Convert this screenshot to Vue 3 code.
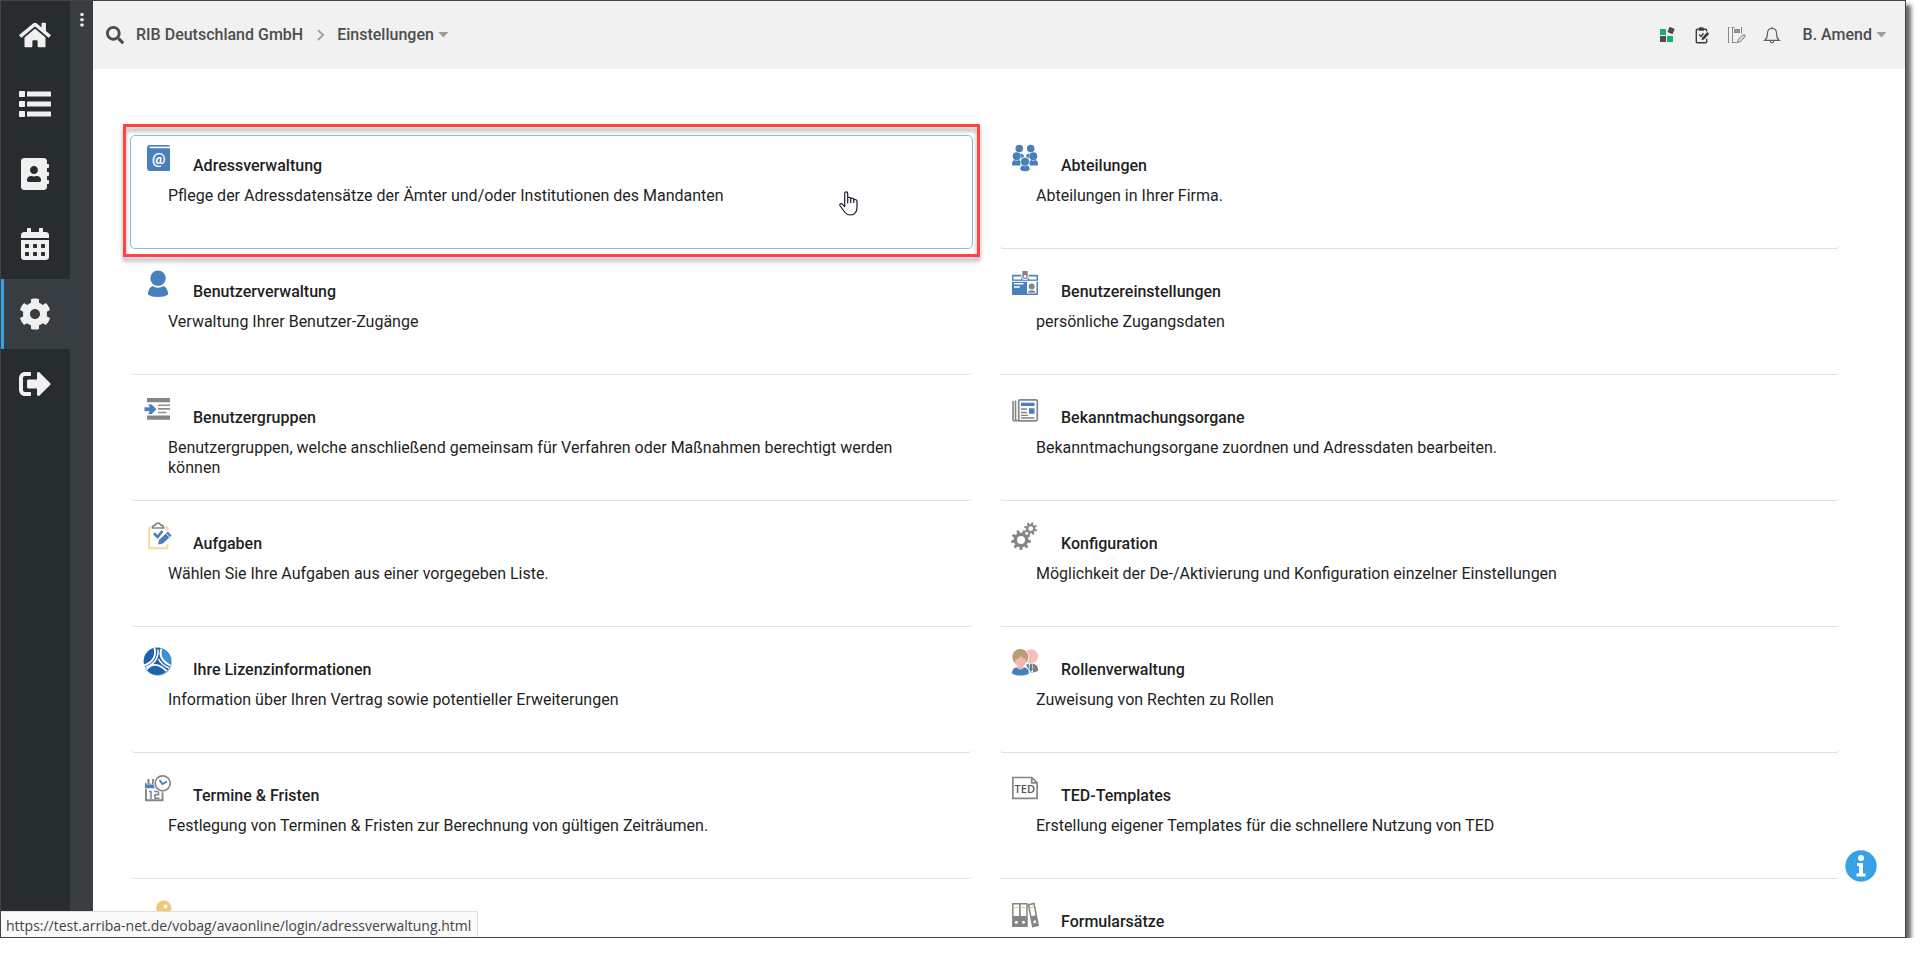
<script setup>
const nav = [
  { id: 'home', label: 'Startseite', box: '0 0 576 512', w: 32, h: 28, d: 'M280.37 148.26L96 300.11V464a16 16 0 0 0 16 16l112.06-.29a16 16 0 0 0 15.92-16V368a16 16 0 0 1 16-16h64a16 16 0 0 1 16 16v95.64a16 16 0 0 0 16 16.05L464 480a16 16 0 0 0 16-16V300L295.67 148.26a12.19 12.19 0 0 0-15.3 0zM571.6 251.47L488 182.56V44.05a12 12 0 0 0-12-12h-56a12 12 0 0 0-12 12v72.61L318.47 43a48 48 0 0 0-61 0L4.34 251.47a12 12 0 0 0-1.6 16.9l25.5 31A12 12 0 0 0 45.15 301l235.22-193.74a12.19 12.19 0 0 1 15.3 0L530.9 301a12 12 0 0 0 16.9-1.6l25.5-31a12 12 0 0 0-1.7-16.93z' },
  { id: 'list', label: 'Liste', box: '0 0 32 32', w: 32, h: 32, d: 'M.8 3h4.4a.8.8 0 0 1 .8.8v4.4a.8.8 0 0 1-.8.8H.8a.8.8 0 0 1-.8-.8V3.800a.8.8 0 0 1 .8-.8zM.8 13h4.400a.8.8 0 0 1 .8.8v4.400a.8.8 0 0 1-.8.8H.8a.8.8 0 0 1-.8-.8v-4.400a.8.8 0 0 1 .8-.8zM.8 23h4.400a.8.8 0 0 1 .8.8v4.400a.8.8 0 0 1-.8.8H.8a.8.8 0 0 1-.8-.8v-4.400a.8.8 0 0 1 .8-.8zM8.500 3.500h23a.5.5 0 0 1 .5.5v4a.5.5 0 0 1-.5.5h-23A.5.5 0 0 1 8 8V4a.5.5 0 0 1 .5-.5zM8.500 13.500h23a.5.5 0 0 1 .5.5v4a.5.5 0 0 1-.5.5h-23A.5.5 0 0 1 8 18v-4a.5.5 0 0 1 .5-.5zM8.500 23.500h23a.5.5 0 0 1 .5.5v4a.5.5 0 0 1-.5.5h-23A.5.5 0 0 1 8 28v-4a.5.5 0 0 1 .5-.5z' },
  { id: 'contacts', label: 'Adressbuch', box: '0 0 448 512', w: 28, h: 32, d: 'M436 160c6.6 0 12-5.4 12-12v-40c0-6.6-5.4-12-12-12h-20V48c0-26.5-21.5-48-48-48H48C21.5 0 0 21.5 0 48v416c0 26.5 21.5 48 48 48h320c26.5 0 48-21.5 48-48v-48h20c6.6 0 12-5.4 12-12v-40c0-6.6-5.4-12-12-12h-20v-64h20c6.6 0 12-5.4 12-12v-40c0-6.6-5.4-12-12-12h-20v-64h20zm-228-32c35.3 0 64 28.7 64 64s-28.7 64-64 64-64-28.7-64-64 28.7-64 64-64zm112 236.8c0 10.6-10 19.2-22.4 19.2H118.4C106 384 96 375.4 96 364.8v-19.2c0-31.8 30.1-57.6 67.2-57.6h5c12.3 5.1 25.7 8 39.8 8s27.6-2.9 39.8-8h5c37.1 0 67.2 25.8 67.2 57.6v19.2z' },
  { id: 'calendar', label: 'Kalender', box: '0 0 448 512', w: 28, h: 32, d: 'M0 464c0 26.5 21.5 48 48 48h352c26.5 0 48-21.5 48-48V192H0zM64 268q0-12 12-12h40q12 0 12 12v40q0 12-12 12H76q-12 0-12-12zM192 268q0-12 12-12h40q12 0 12 12v40q0 12-12 12h-40q-12 0-12-12zM320 268q0-12 12-12h40q12 0 12 12v40q0 12-12 12h-40q-12 0-12-12zM64 396q0-12 12-12h40q12 0 12 12v40q0 12-12 12H76q-12 0-12-12zM192 396q0-12 12-12h40q12 0 12 12v40q0 12-12 12h-40q-12 0-12-12zM320 396q0-12 12-12h40q12 0 12 12v40q0 12-12 12h-40q-12 0-12-12zM400 64h-48V16c0-8.8-7.2-16-16-16h-32c-8.8 0-16 7.2-16 16v48H160V16c0-8.8-7.2-16-16-16h-32c-8.8 0-16 7.2-16 16v48H48C21.5 64 0 85.5 0 112v48h448v-48c0-26.5-21.5-48-48-48z' },
  { id: 'settings', label: 'Einstellungen', active: true, box: '0 0 512 512', w: 32, h: 32, d: 'M487.4 315.7l-42.6-24.6c4.3-23.2 4.3-47 0-70.2l42.6-24.6c4.9-2.8 7.1-8.6 5.5-14-11.1-35.6-30-67.8-54.7-94.6-3.8-4.1-10-5.1-14.8-2.3L380.8 110c-17.9-15.4-38.5-27.3-60.8-35.1V25.8c0-5.6-3.9-10.5-9.4-11.7-36.7-8.2-74.3-7.8-109.2 0-5.500 1.2-9.4 6.1-9.4 11.7V75c-22.2 7.9-42.8 19.8-60.8 35.1L88.7 85.500c-4.9-2.8-11-1.9-14.8 2.3-24.7 26.7-43.6 58.9-54.7 94.6-1.7 5.4.6 11.2 5.500 14L67.3 221c-4.3 23.2-4.3 47 0 70.2l-42.6 24.6c-4.9 2.8-7.1 8.6-5.500 14 11.1 35.6 30 67.8 54.7 94.6 3.8 4.1 10 5.1 14.8 2.3l42.6-24.6c17.9 15.4 38.500 27.3 60.8 35.1v49.2c0 5.6 3.9 10.500 9.4 11.7 36.7 8.2 74.3 7.8 109.2 0 5.500-1.2 9.4-6.1 9.4-11.7v-49.2c22.2-7.9 42.8-19.8 60.8-35.1l42.6 24.6c4.9 2.8 11 1.9 14.8-2.3 24.7-26.7 43.6-58.9 54.7-94.6 1.500-5.500-.7-11.3-5.6-14.100zM256 336c-44.1 0-80-35.9-80-80s35.9-80 80-80 80 35.9 80 80-35.9 80-80 80z' },
  { id: 'logout', label: 'Abmelden', box: '0 0 512 512', w: 32, h: 32, d: 'M497 273L329 441c-15 15-41 4.5-41-17v-96H152c-13.3 0-24-10.7-24-24v-96c0-13.3 10.7-24 24-24h136V88c0-21.4 25.9-32 41-17l168 168c9.3 9.4 9.3 24.6 0 34zM192 436v-40c0-6.6-5.4-12-12-12H96c-17.7 0-32-14.3-32-32V160c0-17.7 14.3-32 32-32h84c6.6 0 12-5.4 12-12V76c0-6.6-5.4-12-12-12H96c-53 0-96 43-96 96v192c0 53 43 96 96 96h84c6.6 0 12-5.4 12-12z' },
]

const cards = [
  { icon: 'address', title: 'Adressverwaltung', text: 'Pflege der Adressdatensätze der Ämter und/oder Institutionen des Mandanten', hover: true },
  { icon: 'departments', title: 'Abteilungen', text: 'Abteilungen in Ihrer Firma.' },
  { icon: 'user', title: 'Benutzerverwaltung', text: 'Verwaltung Ihrer Benutzer-Zugänge' },
  { icon: 'badge', title: 'Benutzereinstellungen', text: 'persönliche Zugangsdaten' },
  { icon: 'groups', title: 'Benutzergruppen', text: 'Benutzergruppen, welche anschließend gemeinsam für Verfahren oder Maßnahmen berechtigt werden können' },
  { icon: 'news', title: 'Bekanntmachungsorgane', text: 'Bekanntmachungsorgane zuordnen und Adressdaten bearbeiten.' },
  { icon: 'tasks', title: 'Aufgaben', text: 'Wählen Sie Ihre Aufgaben aus einer vorgegeben Liste.' },
  { icon: 'gears', title: 'Konfiguration', text: 'Möglichkeit der De-/Aktivierung und Konfiguration einzelner Einstellungen' },
  { icon: 'license', title: 'Ihre Lizenzinformationen', text: 'Information über Ihren Vertrag sowie potentieller Erweiterungen' },
  { icon: 'roles', title: 'Rollenverwaltung', text: 'Zuweisung von Rechten zu Rollen' },
  { icon: 'dates', title: 'Termine & Fristen', text: 'Festlegung von Terminen & Fristen zur Berechnung von gültigen Zeiträumen.' },
  { icon: 'ted', title: 'TED-Templates', text: 'Erstellung eigener Templates für die schnellere Nutzung von TED' },
  { icon: 'key' },
  { icon: 'folders', title: 'Formularsätze' },
]

// Outline of a cog wheel: `teeth` teeth between the root and outer radius, with a round hole.
function cog(cx, cy, outer, root, hole, teeth, turn) {
  const step = (Math.PI * 2) / teeth
  const points = []
  for (let i = 0; i < teeth; i++) {
    const a = i * step + turn
    for (const [r, o] of [[root, -0.3], [outer, -0.18], [outer, 0.18], [root, 0.3]]) {
      points.push(`${(cx + r * Math.cos(a + o * step)).toFixed(2)} ${(cy + r * Math.sin(a + o * step)).toFixed(2)}`)
    }
  }
  return `M${points.join('L')}zM${cx - hole} ${cy}a${hole} ${hole} 0 1 0 ${hole * 2} 0a${hole} ${hole} 0 1 0 ${-hole * 2} 0z`
}
const bigCog = cog(9, 18, 10, 7.4, 4, 9, Math.PI / 2)
const smallCog = cog(18.7, 6.7, 6.6, 4.6, 2.4, 8, 0.3)
</script>

<template>
  <div class="window">
    <nav class="sidebar" aria-label="Hauptnavigation">
      <a v-for="n in nav" :key="n.id" href="#" class="nav-item" :class="{ active: n.active }" :aria-label="n.label">
        <svg :width="n.w" :height="n.h" :viewBox="n.box" fill="currentColor"><path fill-rule="evenodd" :d="n.d" /></svg>
      </a>
    </nav>
    <div class="strip">
      <button class="dots" aria-label="Menü">
        <svg width="4" height="16" viewBox="0 0 4 16" fill="#ededed"><rect x=".3" y="1" width="3.400" height="3" rx="1" /><rect x=".3" y="6.300" width="3.400" height="3" rx="1" /><rect x=".3" y="11.600" width="3.400" height="3" rx="1" /></svg>
      </button>
    </div>

    <div class="content">
      <header class="topbar">
        <button class="plain" aria-label="Suche">
          <svg width="18" height="18" viewBox="0 0 512 512" fill="#4b4b4b"><path d="M505 442.7L405.3 343c-4.500-4.500-10.600-7-17-7H372c27.600-35.3 44-79.7 44-128C416 93.1 322.9 0 208 0S0 93.1 0 208s93.1 208 208 208c48.3 0 92.7-16.4 128-44v16.3c0 6.4 2.500 12.500 7 17l99.7 99.7c9.4 9.4 24.6 9.4 33.9 0l28.3-28.3c9.4-9.4 9.4-24.6.1-34zM208 336c-70.7 0-128-57.2-128-128s57.2-128 128-128 128 57.2 128 128-57.2 128-128 128z" /></svg>
        </button>
        <a href="#" class="crumb company">RIB Deutschland GmbH</a>
        <svg class="chevron" width="8" height="12" viewBox="0 0 8 12" fill="none" stroke="#a3a3a3" stroke-width="2"><path d="M1 1l5 5-5 5" /></svg>
        <button class="plain crumb">Einstellungen<span class="caret"></span></button>

        <div class="tools">
          <button class="plain" aria-label="Module">
            <svg width="18" height="18" viewBox="0 0 18 18"><rect x="2" y="3" width="6" height="6" rx=".6" fill="#0fb36b" /><rect x="2" y="10" width="6" height="6" rx=".6" fill="#4c4c4c" /><rect x="9" y="10" width="6" height="6" rx=".6" fill="#0fb36b" /><rect x="10.300" y="1.700" width="5.600" height="5.600" rx=".6" fill="#4c4c4c" transform="rotate(24 13.100 4.500)" /></svg>
          </button>
          <button class="plain" aria-label="Aufgaben">
            <svg width="18" height="18" viewBox="0 0 18 18" fill="none" stroke="#3c3c3c"><path d="M5.500 3.200H4.300q-1 0-1 1v11.600q0 1 1 1h8.400q1 0 1-1v-3M11 3.200h1.700q1 0 1 1v1.300" stroke-width="1.400" /><path d="M5.500 4.700V2.800q0-1.500 1.700-1.500h2.200q1.600 0 1.600 1.500v1.900z" fill="#3c3c3c" stroke="none" /><path d="M6 8.500l1.900 1.900 2.600-3.200" stroke-width="1.400" /><path d="M8.500 14.200l.5-2.500 5.200-5.800 2.100 1.800-5.300 5.800z" fill="#3c3c3c" stroke="none" /></svg>
          </button>
          <button class="plain" aria-label="Notizen">
            <svg width="18" height="18" viewBox="0 0 18 18" fill="none" stroke="#8a8a8a"><path d="M.5 1v16M4.500 1v16M0 1.500h1.500M3.500 1.500h3M13.500 1v6.500M4.500 16.500h4M0 16.500h1.500" /><rect x="6.500" y="3.500" width="5" height="3" fill="#9a9a9a" /><path d="M9.500 16.500l.8-2.800 4.700-4.500q1-.7 1.700 0t0 1.700l-4.500 4.700z" stroke-width="1.100" /></svg>
          </button>
          <button class="plain" aria-label="Benachrichtigungen">
            <svg width="18" height="18" viewBox="0 0 18 18" fill="none" stroke="#606060" stroke-width="1.200"><path d="M1.800 14.300c2-1.500 2.600-3.500 2.600-6.300C4.400 4.600 6 2.400 9 2.400s4.600 2.200 4.600 5.600c0 2.800.6 4.800 2.600 6.300zM9 2.400V1M7.200 15q.3 1.800 1.800 1.800t1.800-1.800" /></svg>
          </button>
        </div>
        <button class="plain crumb user">B. Amend<span class="caret"></span></button>
      </header>

      <main class="grid">
        <a v-for="c in cards" :key="c.icon" href="#" class="card" :class="{ hover: c.hover }">
          <span class="head">
            <svg class="icon" width="28" height="28" viewBox="0 0 28 28">
              <g v-if="c.icon === 'address'">
                <path d="M6 1h18q2 0 2 2H5.500q0 1.200 1 1.200H26V27H6q-3 0-3-3V4q0-3 3-3z" fill="#4a80ba" />
                <path d="M6 3.300h19.300" stroke="#fff" stroke-width="1.400" />
                <text x="14.700" y="20" text-anchor="middle" class="at">@</text>
              </g>
              <g v-else-if="c.icon === 'departments'" fill="#4a80ba">
                <circle cx="7.300" cy="4.500" r="3.800" /><circle cx="18.700" cy="4.500" r="3.800" />
                <path d="M8.500 9.500q3 0 3.500 3l-2.500 2zM17.500 9.500q-3 0-3.500 3l2.500 2z" />
                <circle cx="4.700" cy="12.300" r="4" /><circle cx="21.300" cy="12.300" r="4" />
                <path d="M0 20.500q0-4 2.500-4.500 2.200 1.300 4.400 0l1.900 1.500q-1 2.800 0 3.900H1q-1 0-1-.9zM26 20.500q0-4-2.500-4.500-2.200 1.300-4.400 0l-1.900 1.500q1 2.800 0 3.900H25q1 0 1-.9z" />
                <circle cx="13" cy="17.700" r="4" />
                <path d="M8.300 25.700q0-3.500 2.200-4.200 2.500 1.300 5 0 2.200.7 2.200 4.200-1.500 1.600-4.700 1.600t-4.700-1.600z" />
              </g>
              <g v-else-if="c.icon === 'user'" fill="#4a80ba">
                <circle cx="14" cy="8.300" r="7.700" />
                <path d="M4 24.500q0-6.500 4.500-8.500 5.500 3.400 11 0Q24 18 24 24.500q-3 2.500-10 2.500T4 24.500z" />
              </g>
              <g v-else-if="c.icon === 'badge'">
                <rect x="0" y="4.700" width="26" height="20.300" rx="1" fill="#4a80ba" />
                <path d="M1.500 6.500H9v3H1.500zM17 6.500h7.500v3H17z" fill="#fff" />
                <path d="M0 11.300h26" stroke="#fff" />
                <path d="M2 13.700h9.500M2 17h5.800" stroke="#fff" stroke-width="1.500" />
                <rect x="15" y="11.500" width="9.500" height="12" fill="#fff" />
                <circle cx="19.700" cy="16.500" r="3" fill="#858585" /><path d="M16 22.700q0-2.500 3.700-2.500t3.700 2.500z" fill="#858585" />
                <path d="M9.300 4h7.400v3q0 3-3.700 3T9.300 7z" fill="#fff" />
                <path d="M10.300 1h5.400v5.500q0 2.500-2.700 2.500t-2.700-2.500z" fill="#858585" /><circle cx="13" cy="6.400" r="1.300" fill="#fff" />
              </g>
              <g v-else-if="c.icon === 'groups'">
                <path d="M3 2h23v4.200H3zM3 19.500h23v4.300H3z" fill="#858585" />
                <path d="M14 9.300h12M14 12.900h12M14 16.500h8.500" stroke="#8f8f8f" stroke-width="1.600" />
                <path d="M.5 11.300H6L4 8.500h3.800l4.600 4.700-4.600 4.800H4l2-2.800H.5z" fill="#4a80ba" />
              </g>
              <g v-else-if="c.icon === 'news'" fill="none" stroke="#858585">
                <rect x="6.700" y="3.800" width="18.600" height="21" rx="1.500" stroke-width="1.700" />
                <path d="M3.500 4.500v18q0 2.300 2 2.300h3M1 5v18q0 1.800 1.700 1.800h3" stroke-width="1.600" />
                <path d="M9 13h6M9 16.500h6M9 19.300h7M9 22h13.500" stroke-width="1.300" />
                <path d="M9 6.700h13.500V10H9zM17 12.300h5.500v5.500H17z" fill="#4a80ba" stroke="none" />
              </g>
              <g v-else-if="c.icon === 'tasks'" fill="none">
                <path d="M7 5.200h-.800q-1 0-1 1v20h18.300v-4M21 5.200h1.300q1.200 0 1.200 1v3" stroke="#f9d893" stroke-width="1.900" />
                <path d="M8.500 6q0-2.800 3-3.100.4-1.700 2.500-1.700t2.500 1.700q3 .3 3 3.100z" fill="#fff" stroke="#858585" stroke-width="1.700" />
                <path d="M10 11.300l3.600 3.700 4.800-6" stroke="#4a80ba" stroke-width="2.800" />
                <path d="M13.500 23l1.200-5.200 9.300-8.600 4 4.200-9.200 8.600z" fill="#4a80ba" stroke="#fff" stroke-width=".8" />
                <path d="M22 11.500l3.800 4" stroke="#fff" stroke-width=".9" />
              </g>
              <g v-else-if="c.icon === 'gears'" fill="#858585" fill-rule="evenodd">
                <path :d="bigCog" /><path :d="smallCog" />
              </g>
              <g v-else-if="c.icon === 'license'">
                <circle cx="14" cy="14" r="14" fill="#bfc8d2" />
                <circle cx="13.300" cy="13.300" r="13.700" fill="#1f61ad" />
                <path d="M17 0q8 3 10 11-.3 3-.8 5-5-3-9.500-5Q18 5 17 0z" fill="#3993d6" />
                <g fill="none" stroke="#fff" stroke-width="1.900">
                  <path d="M10.500 0Q13.500 12.500 0 17.500M17.500 .5Q13.500 11 26.300 17.500" />
                  <path d="M2.500 21.500Q11 11.500 22.500 23" />
                  <path d="M14 1.500Q15 14.500 1.500 19.500" stroke-width="1.500" />
                  <path d="M14.500 11Q17 16.500 25 20" stroke-width="1.500" />
                </g>
              </g>
              <g v-else-if="c.icon === 'roles'">
                <circle cx="19" cy="8.200" r="7" fill="#f2c0b6" />
                <path d="M14 17q2.500-2 5-1.500 7.300 0 7.300 7-2.500 2-8 2z" fill="#808080" /><path d="M17 15.500h3.500l.5 8.500h-4z" fill="#fff" /><path d="M18 16h1.800l.7 6-1.600 2-1.600-2z" fill="#4a80ba" />
                <circle cx="8.300" cy="9.200" r="8.700" fill="#fff" /><circle cx="8.300" cy="9" r="8" fill="#bb9b78" />
                <path d="M3.300 11.500q3.700-.6 5.500-3.500 2 2.300 5 3 .5 7.500-5.400 7.500T3.300 11.500z" fill="#f2b9af" />
                <path d="M-1 26q0-7.500 5.500-8h7.600q5.500.5 5.500 8z" fill="#fff" /><path d="M5 17.500h6.600l-1 4.500H6z" fill="#f2b9af" />
                <path d="M0 25.500q0-5.500 4.500-6.300 3.800 4.500 7.600 0 4.900.8 4.900 6.300-2.500 2-8.500 2T0 25.500z" fill="#4a80ba" />
              </g>
              <g v-else-if="c.icon === 'dates'" fill="none" stroke="#858585">
                <path d="M1 14.300V9.700q0-1 1-1h9l1.500 5.600z" fill="#4a80ba" stroke="none" />
                <path d="M4.500 5v5.500M9 5v5.500" stroke="#fff" stroke-width="4" /><path d="M4.500 5v5.500M9 5v5.500" stroke-width="2" />
                <path d="M2 15v11.300h16.500V18" stroke-width="1.900" />
                <path d="M5 17.500h2V25M10 17.500h4.500v3.300H11v3.500h4.500" stroke-width="1.600" />
                <circle cx="18.700" cy="9.300" r="9.200" fill="#fff" stroke="none" /><circle cx="18.700" cy="9.300" r="7.500" fill="#fff" stroke-width="1.700" />
                <path d="M15.500 6l3 4 4.500-2.500" stroke="#4a80ba" stroke-width="2" />
              </g>
              <g v-else-if="c.icon === 'ted'">
                <path d="M.9 3.500h19l5.200 5.400v15.400H.9zM19.700 3.500v5.400h5.400" fill="#fff" stroke="#858585" stroke-width="1.700" />
                <text x="12.800" y="18.500" text-anchor="middle" class="ted">TED</text>
              </g>
              <g v-else-if="c.icon === 'key'">
                <circle cx="19.700" cy="8.300" r="7.700" fill="#f0c878" /><circle cx="21.500" cy="6.500" r="1.900" fill="#fff" />
                <path d="M14 12l-11 11v4h5v-3h3v-3l6-6z" fill="#f0c878" />
              </g>
              <g v-else-if="c.icon === 'folders'">
                <g fill="#fff" stroke="#858585" stroke-width="1.500"><path d="M.8 3.800h7v22.500h-7zM8 3.800h7v22.500H8z" /><path d="M16.500 4.700l5.500-1.200 4.200 21.800-5.500 1.200z" /></g>
                <path d="M.8 16h14.200v10.300H.8zM18.800 16.500l5.600-1.200 1.900 10-5.600 1.200z" fill="#858585" />
                <path d="M2.500 7.500h3.800M9.500 7.500h3.800M18 7.700l3.300-.7" stroke="#f5cf80" stroke-width="1.500" />
                <g fill="#fff"><circle cx="4.300" cy="22.300" r="1.500" /><circle cx="11.500" cy="22.300" r="1.500" /><circle cx="22.700" cy="21.800" r="1.500" /></g>
              </g>
            </svg>
            <span v-if="c.title" class="title">{{ c.title }}</span>
          </span>
          <span v-if="c.text" class="text">{{ c.text }}</span>
          <svg v-if="c.hover" class="pointer" width="20" height="26" viewBox="0 0 20 26" fill="#fff" stroke="#17172b" stroke-width="1.200" stroke-linejoin="round"><path d="M5.700 15.500V2.600q0-1.700 1.500-1.700t1.500 1.700V12 7.200q0-1 1.300-.9 1.700 0 1.800 1.300v4V8q.2-1.200 1.500-.9 1.500.2 1.500 1.500v3-2.200q.3-1.200 1.500-.9 1.700.3 1.700 2v6q0 3-1.800 5.500-1.500 2-4.700 2-3.500 0-5.500-2.500L1.200 15q-1-1.700.3-2.300 1.200-.5 2.500 1.100z" /></svg>
        </a>
      </main>
    </div>

    <button class="info" aria-label="Information">
      <svg width="32" height="32" viewBox="0 0 32 32"><circle cx="16" cy="16" r="15.700" fill="#36a2e4" /><circle cx="16" cy="8" r="3" fill="#fff" /><path d="M12 13h6v10.500h2.500v3h-9v-3H14v-7.500h-2z" fill="#fff" /></svg>
    </button>
    <div class="status">https://test.arriba-net.de/vobag/avaonline/login/adressverwaltung.html</div>
  </div>
</template>

<style>
html,
body {
  background: #fff;
  overflow: hidden;
}
</style>

<style scoped>
.window {
  position: relative;
  display: flex;
  height: calc(100vh - 15px);
  margin-right: 15px;
  background: #fff;
  box-shadow: 5px 5px 4px rgba(0, 0, 0, 0.6);
  font-family: Roboto, "Liberation Sans", sans-serif;
  font-size: 16px;
  color: #1f1f1f;
}
.window::after {
  content: "";
  position: absolute;
  inset: 0;
  border: 1px solid #444;
  pointer-events: none;
}
button {
  font: inherit;
  cursor: pointer;
}
.sidebar {
  flex: none;
  width: 70px;
  background: #272c2e;
}
.nav-item {
  display: flex;
  align-items: center;
  justify-content: center;
  height: 70px;
  box-sizing: border-box;
  color: #f0f0f0;
}
.nav-item:first-child {
  height: 69px;
}
.nav-item.active {
  background: #373d40;
  border-left: 4px solid #36a2e4;
  padding-right: 4px;
}
.strip {
  flex: none;
  width: 23px;
  background: #373d40;
  text-align: center;
}
.dots {
  border: 0;
  background: none;
  padding: 12px 8px;
}
.dots svg {
  display: block;
}
.content {
  flex: 1;
  min-width: 0;
  overflow: hidden;
}
.topbar {
  display: flex;
  align-items: center;
  height: 69px;
  box-sizing: border-box;
  padding: 0 19px 0 13px;
  background: #f1f1f1;
}
.plain {
  display: flex;
  align-items: center;
  border: 0;
  padding: 0;
  background: none;
}
.crumb {
  color: #4d4d4d;
  font-weight: 500;
  text-decoration: none;
  line-height: 24px;
}
.company {
  margin-left: 12px;
}
.chevron {
  margin: 0 12px 0 14px;
}
.caret {
  width: 11px;
  height: 6px;
  margin-left: 4px;
  background: #9d9d9d;
  clip-path: polygon(0 0, 100% 0, 50% 100%);
}
.tools {
  display: flex;
  gap: 17px;
  margin-left: auto;
  margin-right: 22px;
}
.grid {
  display: grid;
  grid-template-columns: 1fr 1fr;
  gap: 12px 25px;
  padding: 66px 65px 0 37px;
}
.card {
  position: relative;
  display: block;
  min-height: 114px;
  box-sizing: border-box;
  padding: 8px 30px 0 0;
  border: 1px solid transparent;
  border-bottom-color: #dfdfdf;
  border-radius: 5px;
  color: inherit;
  text-decoration: none;
}
.card.hover {
  border-color: #7cc0e6;
}
.card.hover::after {
  content: "";
  position: absolute;
  inset: -12px -8px -9px -8px;
  border: 3px solid #ff4444;
  filter: drop-shadow(0 4px 2px rgba(0, 0, 0, 0.35));
}
.head {
  display: flex;
  gap: 21px;
  padding-left: 13px;
}
.icon {
  flex: none;
  overflow: visible;
}
.title {
  padding-top: 10px;
  font-weight: 500;
  line-height: 24px;
}
.text {
  display: block;
  margin-top: 8px;
  padding-left: 37px;
  line-height: 20px;
}
.at {
  font: 700 15px Roboto, sans-serif;
  fill: #fff;
}
.ted {
  font: 600 11px "Open Sans", sans-serif;
  fill: #555;
}
.pointer {
  position: absolute;
  right: 113px;
  top: 55px;
}
.info {
  position: absolute;
  right: 29px;
  bottom: 56px;
  border: 0;
  padding: 0;
  background: none;
}
.info svg {
  display: block;
}
.status {
  position: absolute;
  left: 1px;
  bottom: 1px;
  box-sizing: border-box;
  height: 26px;
  padding: 0 6px 0 5px;
  border: 1px solid #dedede;
  border-width: 1px 1px 0 0;
  background: #f9f9f9;
  color: #444;
  font: 14px/27px "Open Sans", "Noto Sans", sans-serif;
  white-space: nowrap;
}
</style>
